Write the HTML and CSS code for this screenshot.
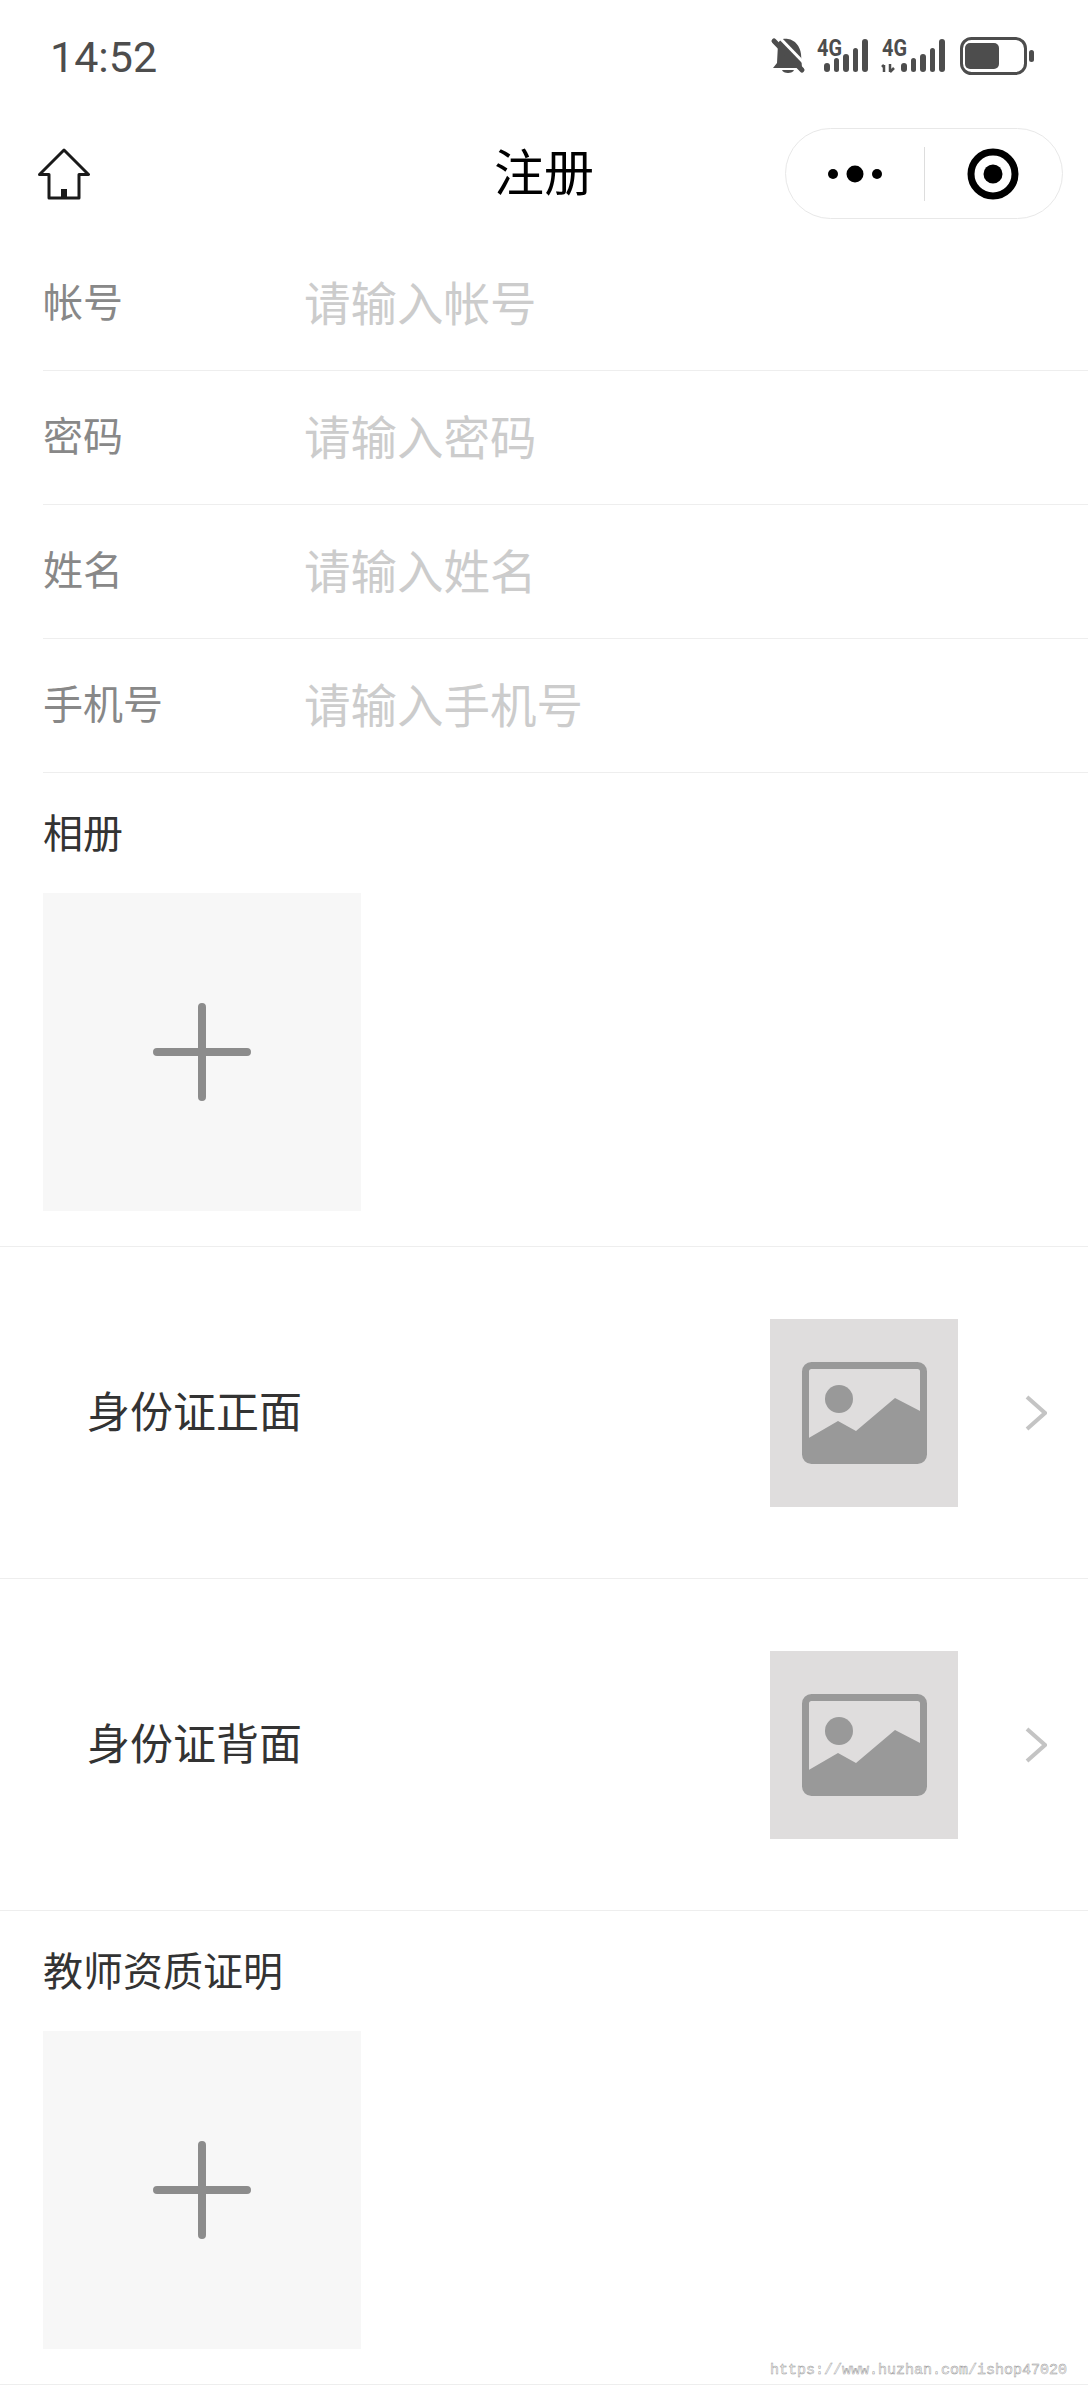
FILE: index.html
```html
<!DOCTYPE html>
<html lang="zh-CN">
<head>
  <meta charset="UTF-8" />
  <meta name="viewport" content="width=device-width, initial-scale=1.0" />
  <title>注册</title>
  <link rel="stylesheet" href="styles.css">
</head>
<body>
  <div class="status-bar">
    <span class="time">14:52</span>
    <svg class="status-icons" width="266" height="50" viewBox="0 0 266 50">
      <g fill="#4d4d4d">
        <!-- bell -->
        <path d="M8 14 C9 10 13 8 18 9 C25 10 30 16 31 24 L32 38 H3 L7 33 Z" />
        <path d="M12 40 H24 C23 44 13 44 12 40 Z" />
        <path d="M7 5 L36 35" stroke="#fff" stroke-width="3" />
        <path d="M4 11 L32 40" stroke="#4d4d4d" stroke-width="5" stroke-linecap="round" />
        <!-- sim 1 -->
        <text class="net" x="47" y="26" textLength="25" lengthAdjust="spacingAndGlyphs">4G</text>
        <rect x="54" y="33" width="6" height="9" rx="3" />
        <rect x="64" y="28" width="5" height="14" rx="2.5" />
        <rect x="73" y="24" width="6" height="18" rx="3" />
        <rect x="83" y="18" width="5" height="24" rx="2.5" />
        <rect x="92" y="9" width="6" height="33" rx="3" />
        <!-- sim 2 -->
        <text class="net" x="112" y="26" textLength="25" lengthAdjust="spacingAndGlyphs">4G</text>
        <path d="M114 35 V42 M112 37 L114 35 M120 34 V42 M120 42 L124 38" stroke="#4d4d4d" stroke-width="2.5" fill="none" />
        <rect x="131" y="33" width="6" height="9" rx="3" />
        <rect x="141" y="28" width="5" height="14" rx="2.5" />
        <rect x="150" y="24" width="6" height="18" rx="3" />
        <rect x="160" y="18" width="5" height="24" rx="2.5" />
        <rect x="169" y="9" width="6" height="33" rx="3" />
        <!-- battery -->
        <rect x="191.5" y="8.5" width="64" height="35" rx="10" fill="none" stroke="#4d4d4d" stroke-width="3" />
        <rect x="195" y="13" width="34" height="26" rx="5" />
        <rect x="259" y="20" width="5" height="12" rx="2.5" />
      </g>
    </svg>
  </div>

  <div class="nav-bar">
    <div class="nav-left">
      <svg width="52" height="52" viewBox="0 0 52 52">
        <path d="M26 2 L50.5 26.5 H41 V50 H11 V26.5 H1.5 Z" fill="none" stroke="#1a1a1a" stroke-width="3" stroke-linejoin="round" />
        <rect x="23" y="41" width="6" height="9" fill="#1a1a1a" />
      </svg>
    </div>
    <div class="nav-title">注册</div>
    <div class="capsule">
      <div class="capsule-half">
        <svg width="60" height="20" viewBox="0 0 60 20">
          <circle cx="8" cy="10" r="5" />
          <circle cx="30" cy="10" r="8.5" />
          <circle cx="52" cy="10" r="5" />
        </svg>
      </div>
      <div class="capsule-line"></div>
      <div class="capsule-half">
        <svg width="52" height="52" viewBox="0 0 52 52">
          <circle cx="26" cy="26" r="22" fill="none" stroke="#000" stroke-width="7" />
          <circle cx="26" cy="26" r="9.5" />
        </svg>
      </div>
    </div>
  </div>

  <div class="form-row"><span class="label">帐号</span><span class="placeholder">请输入帐号</span></div>
  <div class="form-row"><span class="label">密码</span><span class="placeholder">请输入密码</span></div>
  <div class="form-row"><span class="label">姓名</span><span class="placeholder">请输入姓名</span></div>
  <div class="form-row"><span class="label">手机号</span><span class="placeholder">请输入手机号</span></div>

  <div class="upload-section">
    <div class="section-title">相册</div>
    <div class="upload-box">
      <svg width="98" height="98" viewBox="0 0 98 98">
        <path d="M4 49 H94 M49 4 V94" stroke="#8c8c8c" stroke-width="8" stroke-linecap="round" />
      </svg>
    </div>
  </div>

  <div class="id-row">
    <span class="id-name">身份证正面</span>
    <div class="thumb">
      <svg width="125" height="102" viewBox="0 0 125 102">
        <rect x="3.5" y="3.5" width="118" height="95" rx="6" fill="none" stroke="#999" stroke-width="7" />
        <circle cx="37" cy="37" r="14" fill="#999" />
        <path d="M5 77 L36 59 L54 69 L93 36 L120 50 V96 H5 Z" fill="#999" />
      </svg>
    </div>
    <svg class="chevron" width="22" height="36" viewBox="0 0 22 36">
      <path d="M2 2 L20 18 L2 34" fill="none" stroke="#c4c4c4" stroke-width="4" />
    </svg>
  </div>

  <div class="id-row">
    <span class="id-name">身份证背面</span>
    <div class="thumb">
      <svg width="125" height="102" viewBox="0 0 125 102">
        <rect x="3.5" y="3.5" width="118" height="95" rx="6" fill="none" stroke="#999" stroke-width="7" />
        <circle cx="37" cy="37" r="14" fill="#999" />
        <path d="M5 77 L36 59 L54 69 L93 36 L120 50 V96 H5 Z" fill="#999" />
      </svg>
    </div>
    <svg class="chevron" width="22" height="36" viewBox="0 0 22 36">
      <path d="M2 2 L20 18 L2 34" fill="none" stroke="#c4c4c4" stroke-width="4" />
    </svg>
  </div>

  <div class="upload-section">
    <div class="section-title">教师资质证明</div>
    <div class="upload-box">
      <svg width="98" height="98" viewBox="0 0 98 98">
        <path d="M4 49 H94 M49 4 V94" stroke="#8c8c8c" stroke-width="8" stroke-linecap="round" />
      </svg>
    </div>
  </div>

  <div class="watermark">https://www.huzhan.com/ishop47020</div>
</body>
</html>
```

FILE: styles.css
```css
body {
  margin: 0;
  font-family: "Noto Sans CJK SC", "Noto Sans", sans-serif;
  background: #fff;
  color: #333;
}

.status-bar {
  height: 110px;
  padding: 4px 52px 0 50px;
  box-sizing: border-box;
  display: flex;
  align-items: center;
  justify-content: space-between;
}
.time { font-family: Roboto, sans-serif; font-size: 43px; color: #4d4d4d; }
.status-icons { display: block; margin-top: -4px; }
.net { font-family: Roboto, sans-serif; font-size: 24px; font-weight: 700; }

.nav-bar {
  height: 127px;
  padding: 0 25px;
  display: grid;
  grid-template-columns: minmax(0, 1fr) auto minmax(0, 1fr);
  align-items: center;
}
.nav-left { padding-left: 13px; }
.nav-left svg { display: block; }
.nav-title { font-size: 50px; color: #000; padding-bottom: 10px; }
.capsule {
  justify-self: end;
  width: 278px;
  height: 91px;
  box-sizing: border-box;
  border: 1.5px solid #e8e8e8;
  border-radius: 46px;
  display: flex;
  align-items: center;
}
.capsule-half { flex: 1; display: flex; justify-content: center; }
.capsule-line { width: 1px; height: 54px; background: #ddd; }

.form-row {
  height: 134px;
  margin-left: 43px;
  padding-bottom: 7px;
  box-sizing: border-box;
  border-bottom: 1px solid #eee;
  display: flex;
  align-items: center;
}
.label { width: 261px; font-size: 40px; color: #888; }
.placeholder { font-size: 46.5px; color: #ccc; }

.upload-section {
  padding: 28px 43px 35px;
  border-bottom: 1px solid #eee;
}
.section-title { font-size: 40px; line-height: 60px; margin-bottom: 32px; color: #333; }
.upload-box {
  width: 318px;
  height: 318px;
  background: #f7f7f7;
  display: flex;
  align-items: center;
  justify-content: center;
}

.id-row {
  height: 332px;
  padding: 0 41px 0 87px;
  box-sizing: border-box;
  border-bottom: 1px solid #eee;
  display: flex;
  align-items: center;
}
.id-name { flex: 1; font-size: 43px; color: #333; padding-bottom: 7px; }
.thumb {
  width: 188px;
  height: 188px;
  background: #dfdddd;
  display: flex;
  align-items: center;
  justify-content: center;
}
.chevron { margin-left: 67px; }

.watermark {
  position: absolute;
  left: 770px;
  top: 2361px;
  font-family: "Liberation Mono", monospace;
  font-size: 15px;
  line-height: 20px;
  color: #fff;
  -webkit-text-stroke: 0.5px #999;
}
```
